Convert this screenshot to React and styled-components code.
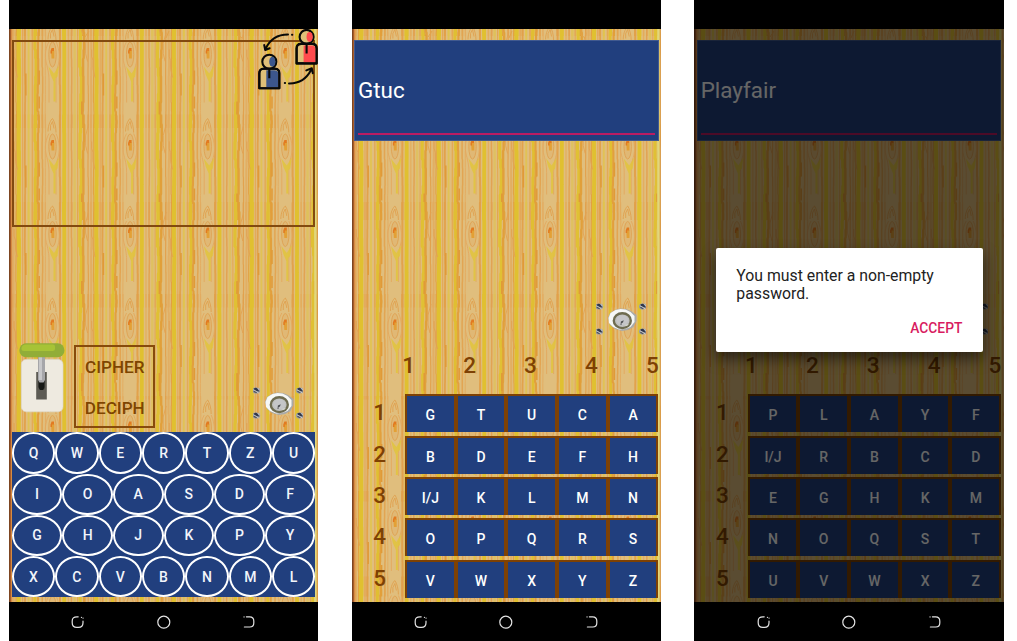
import React from "react";
import styled, { createGlobalStyle } from "styled-components";

const GlobalStyle = createGlobalStyle`
  body { margin: 0; background: #fff; font-family: Roboto, "Liberation Sans", sans-serif; }
  *, *::before, *::after { box-sizing: border-box; }
`;

const NAVY = "#213f7e";
const BROWN = "#7e4104";

const Page = styled.main`
  display: grid;
  grid-template-columns: 309px 309px 310px;
  column-gap: 33.7px;
  padding-left: 9px;
  width: 1017px;
  height: 641px;
  overflow: hidden;
`;

const Phone = styled.section`
  position: relative;
  display: grid;
  grid-template-rows: 29px 573px 39px;
  min-width: 0;
  background: #000;
`;

const Board = styled.div`
  grid-row: 2;
  position: relative;
  overflow: hidden;
`;

const WoodSvg = styled.svg`
  position: absolute;
  inset: 0;
  width: 100%;
  height: 100%;
`;

const BoardContent = styled.div`
  position: relative;
  height: 100%;
  display: flex;
  flex-direction: column;
  padding: 11px 2px 0 ${(p) => p.$left}px;
`;

const Shade = styled.div`
  position: absolute;
  inset: 0;
  background: rgba(0, 0, 0, 0.6);
`;

const NavBar = styled.nav`
  grid-row: 3;
  display: flex;
  justify-content: center;
  align-items: center;
  gap: 71.5px;
  padding-top: 1px;
  svg { width: 14px; height: 14px; flex: none; }
`;

const MessageArea = styled.div`
  width: 303.5px;
  height: 187px;
  border: 2px solid #824a10;
  flex: none;
`;

const SwapBadge = styled.svg`
  position: absolute;
  left: 245px;
  top: -2px;
  width: 64px;
  height: 64px;
`;

const Controls = styled.div`
  display: flex;
  align-items: flex-start;
  height: 92px;
  margin-top: 113.3px;
  flex: none;
`;

const LeverSvg = styled.svg`
  width: 46px;
  height: 70px;
  margin-left: 7px;
  margin-top: 2.4px;
  flex: none;
`;

const ModeBox = styled.div`
  margin: 4.8px 0 0 9.5px;
  width: 81px;
  height: 83px;
  border: 2px solid #874b0c;
  display: grid;
  grid-template-rows: 40px 41px;
  align-items: center;
  justify-items: center;
  color: #7e4500;
  font-weight: 500;
  font-size: 17.1px;
`;

const LockSvg = styled.svg`
  width: 50px;
  height: 32px;
  flex: none;
  margin-left: ${(p) => p.$ml}px;
  margin-top: ${(p) => p.$mt}px;
`;

const Keyboard = styled.div`
  width: 303.5px;
  height: 165px;
  display: grid;
  grid-template-rows: repeat(4, 1fr);
  background: ${NAVY};
  flex: none;
`;

const KeyRow = styled.div`
  display: grid;
  grid-template-columns: repeat(${(p) => p.$n}, 1fr);
`;

const Key = styled.span`
  display: flex;
  align-items: center;
  justify-content: center;
  border: 2px solid #fff;
  border-radius: 50%;
  color: #f2f5fb;
  font-size: 14px;
  font-weight: 500;
`;

const PasswordField = styled.div`
  width: 304.3px;
  height: 101px;
  border: 1px solid #415a90;
  background: ${NAVY};
  display: flex;
  flex-direction: column;
  padding: 0 3px 5px 2.6px;
  color: #fff;
  font-size: 22.4px;
  flex: none;
`;

const PasswordText = styled.div`
  flex: 1;
  display: flex;
  align-items: center;
  padding-top: 6px;
  border-bottom: 2px solid #bb1c62;
`;

const ColumnLabels = styled.div`
  display: grid;
  grid-template-columns: repeat(5, 60.9px);
  margin: 15.6px 0 0 23.9px;
  height: 28px;
  align-items: center;
  justify-items: center;
  color: ${BROWN};
  font-size: 22.5px;
  font-weight: 500;
  flex: none;
`;

const Square = styled.div`
  display: grid;
  row-gap: 3.3px;
  margin-top: 15.4px;
  flex: none;
`;

const SquareRow = styled.div`
  display: grid;
  grid-template-columns: 50.6px repeat(5, 50.7px);
  height: 38px;
`;

const RowLabel = styled.span`
  display: flex;
  align-items: center;
  justify-content: center;
  padding-bottom: 2px;
  color: ${BROWN};
  font-size: 22.5px;
  font-weight: 500;
`;

const Cell = styled.span`
  display: flex;
  align-items: center;
  justify-content: center;
  padding-top: 2px;
  border: 2px solid ${BROWN};
  border-bottom: 0;
  background: ${NAVY};
  color: #fff;
  font-size: 14px;
  font-weight: 500;
`;

const Dialog = styled.div`
  position: absolute;
  left: 21.3px;
  top: 247.7px;
  width: 267.4px;
  height: 104px;
  border-radius: 2px;
  background: #fff;
  box-shadow: 0 7px 14px rgba(0, 0, 0, 0.5);
  padding: 19px 20.7px 0;
  display: flex;
  flex-direction: column;
`;

const DialogText = styled.p`
  margin: 0;
  color: #222;
  font-size: 15.8px;
  line-height: 18.5px;
`;

const DialogAction = styled.button`
  align-self: flex-end;
  margin: 16.4px 0 0;
  padding: 0;
  border: 0;
  background: none;
  color: #d81b60;
  font: 500 13.8px/16px Roboto, sans-serif;
`;

/* Wood grain: one knot every 77.6px across, rows at the listed heights. */
const KNOT_ROWS = [-73.5, 18.5, 110.5, 198, 290, 392, 487, 572.5];
const TILE = 77.6;
const GRAIN = [
  // x, width, colour, wobble, opacity
  [-6, 3.2, "#e0c034", 0.8, 1],
  [-3.2, 2.4, "#e09e38", 0.8, 0.95],
  [1.6, 1.2, "#e2a04c", 0.2, 0.95],
  [4.6, 2, "#e2ac5e", 0.3, 0.85],
  [7.2, 1.2, "#e2a040", 0.3, 0.95],
  [9.9, 4, "#e0c030", 0.2, 1],
  [13.6, 1.2, "#e3a658", 0, 0.9],
  [16, 1.8, "#e2a04a", 0.2, 0.95],
  [19.6, 1.8, "#e0c34c", 0, 0.85],
  [23.4, 1.5, "#e3a752", 0, 0.9],
  [26.5, 3, "#e0be32", 0.6, 1],
  [29.2, 2.1, "#e19e3a", 0.7, 0.95],
  [33.4, 1.5, "#e2a350", 0.3, 0.95],
  [36.4, 1, "#e3ab5e", 0.2, 0.9],
  [51, 2, "#e2a04a", 0.2, 0.95],
  [55.2, 3.8, "#e0c030", 0.1, 1],
  [59.4, 1.3, "#e3ab5a", 0, 0.85],
  [62.6, 1.5, "#e2a150", 0.2, 0.95],
  [65.7, 2.4, "#dfc058", 0, 0.75],
  [68.6, 1.1, "#e3a650", 0.1, 0.9],
];
const WOBBLE = [0, 0, -0.6, -1, -1, 0.2, 0.9, 0.9, 0.3, -0.4, -0.4, 0];

function grainLine(x, wobble, phase) {
  let d = `M${x} -25`;
  for (let i = 0; i < 12; i += 1) {
    const nx = x + WOBBLE[(i + phase) % 12] * wobble;
    const y = -25 + i * 8.8;
    d += ` L${nx.toFixed(2)} ${(y + 1.6).toFixed(1)} V${(y + 8.8).toFixed(1)}`;
  }
  return d;
}

function Wood({ id, left }) {
  return (
    <WoodSvg aria-hidden="true">
      <defs>
        <g id={id} fill="none">
          {GRAIN.map(([x, w, c, wob, o], i) => (
            <path key={x} d={grainLine(x, wob, i * 5)} stroke={c} strokeWidth={w} opacity={o} />
          ))}
          <path d="M16.8 26v22M30.2 23v14M30.2 49v12M-4.8 54v18" stroke="#e09a38" strokeWidth="1.5" />
          <path d="M40-6c-5 9-4 18-2 24 1 5 2 8 2 15v22M47-6c4 9 4 18 2 24-2 6-2 12-2 20v17" stroke="#e3a85f" strokeWidth=".9" />
          <ellipse cx="43.5" cy="7" rx="3.7" ry="12.5" fill="#e0b875" stroke="#dfa252" strokeWidth=".9" />
          <path d="M39-8c0-7 3-12 4.5-13 2 3 3.5 8 3.5 14M41.5-9v-5l2-4 1.5 7" stroke="#e0a04e" strokeWidth=".9" />
          <path d="M42 3h3.3v8h-2.8z" fill="#e3a035" />
          <path d="M41.5 3.6l1.1-3H45v3h-2V6h-1.5z" fill="#e27a20" />
          <path d="M39.5 19l5.5 7 5-8-1.5 11-2 2v23h-2V34l-3-7z" fill="#e0c43c" opacity=".85" />
          <path d="M5 2v7l1.5 4v9l2 8M2-15l-3 11v10l2 8" stroke="#e2a252" strokeWidth=".9" />
        </g>
      </defs>
      <rect width="100%" height="100%" fill="#e0be7d" />
      {KNOT_ROWS.map((y) =>
        [-1, 0, 1, 2, 3, 4].map((c) => (
          <use key={`${y}-${c}`} href={`#${id}`} x={c * TILE + left} y={y} />
        ))
      )}
      <g stroke="#e1a34b" fill="none" strokeWidth="1">
        <path d="M72 0l2 6M76 8l4-6M150 0l2 7M157 9l3-7M229 0v6l4 3" />
      </g>
      <rect width="2" height="573" fill="#a65b2a" />
      <rect width=".8" height="573" fill="#744020" />
      <rect x="2" width="1.3" height="573" fill="#d78b42" />
      <rect x="305.2" width="2.6" height="573" fill="#e1d77c" />
      <rect x="307.8" width="1" height="573" fill="#d99a48" />
    </WoodSvg>
  );
}

function Screw({ x, y }) {
  return (
    <g transform={`translate(${x} ${y})`}>
      <ellipse rx="3.9" ry="3.1" fill="#9a9da2" />
      <path d="M-3-1.2Q-1-4 1.2-2L3.2 1Q1.5 1 0 .2z" fill="#30374a" />
      <path d="M-2.8 1.2L0 2.8l1.4-1-3-2z" fill="#51545c" />
      <path d="M-3-1L2.5 2.6M1.5-2l1.7 1" stroke="#d8d9da" strokeWidth=".8" />
    </g>
  );
}

function Lock({ ml, mt }) {
  return (
    <LockSvg viewBox="0 0 50 32" $ml={ml} $mt={mt} aria-hidden="true">
      <Screw x={3.2} y={3.5} />
      <Screw x={46.8} y={3.5} />
      <Screw x={3.2} y={28.5} />
      <Screw x={46.8} y={28.5} />
      <path d="M12 15l2-5 5-3 5-1.5 6 .5 5 2 5.5 4v6l-3 6-5.5 3-6 1-7-2-5-4z" fill="#a9aaa9" />
      <path d="M12.5 15l2-5 5-3 5-1 5 .5 5 2.5 4 4v6l-4 5-5.5 2-6 .5-6-2.5-4-4z" fill="#f6f8f6" />
      <ellipse cx="26.3" cy="17.7" rx="8.5" ry="7.4" fill="#bfc0bf" stroke="#6e6c50" strokeWidth="2.4" />
      <ellipse cx="26.3" cy="17.2" rx="5.8" ry="5" fill="#c5c6c8" />
      <path d="M24.5 22l.4-3.5 2.8-1.3-.7 2.3-1.5.7V22z" fill="#4d4f53" />
      <path d="M28 22l5-1-2 2z" fill="#d7dad6" />
    </LockSvg>
  );
}

function Lever() {
  return (
    <LeverSvg viewBox="0 0 46 70" aria-hidden="true">
      <rect x="2.4" y="16.4" width="41.6" height="52.4" rx="5" fill="#eeeae0" stroke="#dcd8cb" strokeWidth=".7" />
      <rect x="17.2" y="29" width="10.6" height="27.5" fill="#5d5b54" />
      <path d="M19 29h7v15l-1 2.5h-4.5L19 44z" fill="#34342f" />
      <path d="M20 39h5v6l-1 2h-3l-1-2z" fill="#161815" />
      <path d="M19 13h7v24l-1.5 2.5h-4L19 37z" fill="#a6a6a9" />
      <path d="M20 14h3v23h-3z" fill="#c7c7c9" />
      <rect x=".4" y=".3" width="45" height="14" rx="6.6" fill="#91ad38" />
      <path d="M7 1.5h27q2 0 2 2v2q0 2.5-2.5 2.5H5Q2.4 8 2.4 6q0-4.5 4.6-4.5z" fill="#a7c336" />
    </LeverSvg>
  );
}

function Person({ x, y, color }) {
  return (
    <g transform={`translate(${x} ${y})`} stroke="#080908" strokeWidth="2.1" strokeLinejoin="round">
      <circle cx="11" cy="7.5" r="7" fill="#dfc078" />
      <ellipse cx="14" cy="7.5" rx="3.1" ry="5" fill={color} stroke="none" />
      <path d="M1 34V19q0-4.5 4.5-4.5h11Q21 14.5 21 19v15z" fill="#dfc078" />
      <path d="M8 33V16h8q4 0 4 4v13z" fill={color} stroke="none" />
      <path d="M1 34V19q0-4.5 4.5-4.5h11Q21 14.5 21 19v15zM11 15v9" fill="none" />
    </g>
  );
}

function Swap() {
  return (
    <SwapBadge viewBox="0 0 64 64" aria-hidden="true">
      <Person x={4.3} y={27.3} color="#3c568c" />
      <Person x={41.6} y={2.4} color="#ff4b4e" />
      <g fill="none" stroke="#080908" strokeWidth="2" strokeLinecap="round" strokeLinejoin="round">
        <path d="M34 7.5q-16 0-22.5 14.5M10.2 18l1 5 4.5-1.8M38 7.7h.3M30.8 56h.3M35 56.4q15 .3 22-13.4M52.3 43.4l5.5-2.2 1 5" />
      </g>
    </SwapBadge>
  );
}

function SystemNav() {
  const stroke = { fill: "none", stroke: "#e4e4e4", strokeWidth: 1.2, strokeLinecap: "round" };
  return (
    <NavBar>
      <svg viewBox="0 0 14 14" {...stroke}>
        <path d="M7.2 1.8H6Q1.2 1.8 1.2 6v1.8q0 4.6 4.6 4.6h1.6q4.6 0 4.6-4.6V6.2M10.4 2.3h.1M12 3.1h.1" />
      </svg>
      <svg viewBox="0 0 14 14" {...stroke}>
        <circle cx="6.8" cy="7.2" r="6" />
      </svg>
      <svg viewBox="0 0 14 14" {...stroke}>
        <path d="M4.4 1.8H7.6Q11.8 1.8 11.8 6v2q0 4-4 4H2.4M2 1.9h.1" />
      </svg>
    </NavBar>
  );
}

const KEY_ROWS = ["QWERTZU", "IOASDF", "GHJKPY", "XCVBNML"];
const GTUC = [
  ["G", "T", "U", "C", "A"],
  ["B", "D", "E", "F", "H"],
  ["I/J", "K", "L", "M", "N"],
  ["O", "P", "Q", "R", "S"],
  ["V", "W", "X", "Y", "Z"],
];
const PLAYFAIR = [
  ["P", "L", "A", "Y", "F"],
  ["I/J", "R", "B", "C", "D"],
  ["E", "G", "H", "K", "M"],
  ["N", "O", "Q", "S", "T"],
  ["U", "V", "W", "X", "Z"],
];

function CipherScreen() {
  return (
    <Phone>
      <Board>
        <Wood id="grain-a" left={0} />
        <BoardContent $left={2.8}>
          <MessageArea />
          <Controls>
            <Lever />
            <ModeBox>
              <span>CIPHER</span>
              <span>DECIPH</span>
            </ModeBox>
            <Lock ml={97.3} mt={46.6} />
          </Controls>
          <Keyboard>
            {KEY_ROWS.map((row) => (
              <KeyRow key={row} $n={row.length}>
                {[...row].map((k) => (
                  <Key key={k}>{k}</Key>
                ))}
              </KeyRow>
            ))}
          </Keyboard>
        </BoardContent>
        <Swap />
      </Board>
      <SystemNav />
    </Phone>
  );
}

function PasswordScreen({ id, word, square, children }) {
  return (
    <Phone>
      <Board>
        <Wood id={id} left={-0.6} />
        <BoardContent $left={2.7}>
          <PasswordField>
            <PasswordText>{word}</PasswordText>
          </PasswordField>
          <Lock ml={241.4} mt={162.4} />
          <ColumnLabels>
            {[1, 2, 3, 4, 5].map((n) => (
              <span key={n}>{n}</span>
            ))}
          </ColumnLabels>
          <Square>
            {square.map((row, i) => (
              <SquareRow key={row.join("")}>
                <RowLabel>{i + 1}</RowLabel>
                {row.map((c) => (
                  <Cell key={c}>{c}</Cell>
                ))}
              </SquareRow>
            ))}
          </Square>
        </BoardContent>
        {children && <Shade />}
      </Board>
      <SystemNav />
      {children}
    </Phone>
  );
}

export default function App() {
  return (
    <>
      <GlobalStyle />
      <Page>
        <CipherScreen />
        <PasswordScreen id="grain-b" word="Gtuc" square={GTUC} />
        <PasswordScreen id="grain-c" word="Playfair" square={PLAYFAIR}>
          <Dialog role="dialog">
            <DialogText>You must enter a non-empty password.</DialogText>
            <DialogAction>ACCEPT</DialogAction>
          </Dialog>
        </PasswordScreen>
      </Page>
    </>
  );
}
